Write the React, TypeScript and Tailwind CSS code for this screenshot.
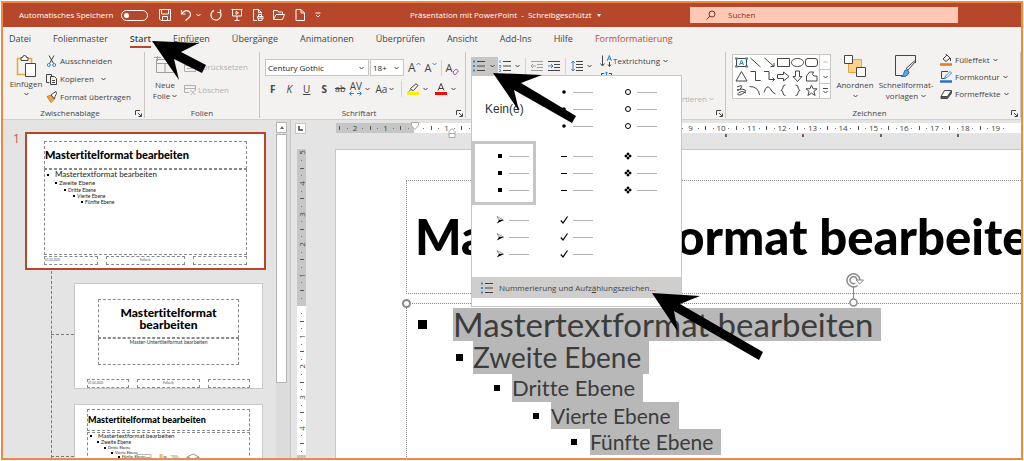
import type { ReactNode } from "react";

type IconProps = { w?: number; h?: number; className?: string; children: ReactNode };

function Icon({ w = 12, h = 12, className = "", children }: IconProps) {
  return (
    <svg
      width={w}
      height={h}
      viewBox={`0 0 ${w} ${h}`}
      fill="none"
      stroke="currentColor"
      strokeWidth="1"
      className={`shrink-0 ${className}`}
      aria-hidden="true"
    >
      {children}
    </svg>
  );
}

function Chevron({ className = "" }: { className?: string }) {
  return (
    <Icon w={5} h={4} className={className}>
      <path d="M.5 1l2 2 2-2" />
    </Icon>
  );
}

function Divider() {
  return <span className="h-4 w-px bg-[#d2d0ce]" />;
}

/* Title bar */

function TitleBar() {
  return (
    <header className="flex h-6 items-center bg-[#b7472a] pl-4 pr-[63px] text-white">
      <label htmlFor="autosave" className="mr-2">Automatisches Speichern</label>
      <input
        id="autosave"
        type="checkbox"
        role="switch"
        className="h-[11px] w-[27px] appearance-none rounded-full border border-white before:ml-[2px] before:mt-[2px] before:block before:size-[5px] before:rounded-full before:bg-white"
      />
      <div className="ml-[11px] flex items-center gap-[9px]">
        <button aria-label="Speichern">
          <Icon>
            <path d="M.5.5h11v11H2l-1.500-1.500zM2.500.5v4.500h7V.5M3.500 11.500v-4h5v4" />
          </Icon>
        </button>
        <button aria-label="Rückgängig" className="flex items-center gap-[4px]">
          <Icon>
            <path d="M1.500 1v4h4M1.500 5C4 1.500 7 1 9 2.500s2 4.500 0 6L5.500 11.500" strokeWidth="1.200" />
          </Icon>
          <Chevron />
        </button>
        <button aria-label="Wiederholen">
          <Icon>
            <path d="M10.500.5v3h-3M10.300 3.500A5 5 0 1 1 4 1.400" strokeWidth="1.200" />
          </Icon>
        </button>
        <button aria-label="Präsentation starten">
          <Icon>
            <path d="M.5.5h11M1.500.5v6.500h9V.5M6 7v4M3.500 11.500h5M5 2.300v3l2.500-1.500z" />
          </Icon>
        </button>
        <button aria-label="Drucken">
          <Icon>
            <path d="M5 11.500H1.500V.5h5l3 3v1M6.500.5v3h3M6.500 7V5.500h3V7M5.500 9.500V7.500h5.500v2.500M6.500 9h3.500v2.500H6.500z" />
          </Icon>
        </button>
        <button aria-label="Öffnen">
          <Icon>
            <path d="M.5 10V1.500h4L5.500 3h4v2M.5 10.500L3 5.500h8.500l-2 5z" />
          </Icon>
        </button>
        <button aria-label="Neu">
          <Icon>
            <path d="M2 .5h5l3.500 3.500v7.500H2zM7 .5V4h3.500" />
          </Icon>
        </button>
        <button aria-label="Symbolleiste anpassen">
          <Icon w={6} h={6}>
            <path d="M.5 1h5M1 3l2 2 2-2" />
          </Icon>
        </button>
      </div>
      <div className="flex flex-1 items-center justify-center gap-[6px]">
        <span className="whitespace-pre">Präsentation mit PowerPoint  -  Schreibgeschützt</span>
        <span className="border-x-2 border-t-[3px] border-x-transparent border-t-white" />
      </div>
      <label className="flex h-4 w-[268px] items-center gap-3 bg-[#ffc8b4] pl-4 text-[#8f2f1a]">
        <Icon w={10} h={10}>
          <circle cx="6" cy="4" r="3" />
          <path d="M4 6L.5 9.500" />
        </Icon>
        <input
          type="search"
          aria-label="Suchen"
          placeholder="Suchen"
          className="min-w-0 flex-1 bg-transparent outline-none placeholder:text-[#8f2f1a]"
        />
      </label>
    </header>
  );
}

const tabs = [
  "Datei", "Folienmaster", "Start", "Einfügen", "Übergänge", "Animationen",
  "Überprüfen", "Ansicht", "Add-Ins", "Hilfe", "Formformatierung",
];

function TabStrip() {
  return (
    <nav className="flex h-[23px] items-center gap-[22px] pl-[6px] text-[9px]">
      {tabs.map((tab) => {
        if (tab === "Start") {
          return (
            <button key={tab} className="mt-[3px] border-b-2 border-[#b7472a] pb-px font-semibold">
              {tab}
            </button>
          );
        }
        return (
          <button key={tab} className={tab === "Formformatierung" ? "text-[#c04a2b]" : ""}>
            {tab}
          </button>
        );
      })}
    </nav>
  );
}

/* Ribbon */

type GroupProps = { label: string; launcher?: boolean; className: string; children: ReactNode };

function Group({ label, launcher = true, className, children }: GroupProps) {
  return (
    <section className={`flex flex-col border-r border-[#c8c6c4] ${className}`}>
      <div className="flex-1">{children}</div>
      <div className="flex h-[10px] items-center px-[2px]">
        <span className="flex-1 text-center">{label}</span>
        {launcher ? (
          <button aria-label={`${label} öffnen`}>
            <Icon w={7} h={7}>
              <path d="M.5 5V.5H5M3 3l3 3M6.500 3.500v3h-3" />
            </Icon>
          </button>
        ) : null}
      </div>
    </section>
  );
}

function ClipboardGroup() {
  return (
    <Group label="Zwischenablage" className="w-[142px]">
      <div className="flex gap-[2px] pl-[5px]">
        <button className="flex w-9 flex-col items-center pt-[3px]">
          <Icon w={21} h={22} className="mb-[2px]">
            <path d="M5 3.500H1.500v16H9M12 3.500h3.500V8" stroke="#e8a33d" strokeWidth="1.500" />
            <path d="M5 5.500v-3h1.500a2 2 0 0 1 4 0H12v3z" fill="#fff" />
            <path d="M9.500 8.500h10v13h-10z" fill="#fff" />
          </Icon>
          <span className="leading-[10px]">Einfügen</span>
          <Chevron className="mt-[3px]" />
        </button>
        <div className="flex flex-col gap-[6px] pt-[3px] leading-3">
          <button className="flex items-center gap-[3px]">
            <Icon w={11}>
              <path d="M3 .5l4.500 8M8 .5L3.500 8.500" />
              <circle cx="2.800" cy="10" r="1.500" stroke="#2b88d8" />
              <circle cx="8.200" cy="10" r="1.500" stroke="#2b88d8" />
            </Icon>
            Ausschneiden
          </button>
          <button className="flex items-center gap-[3px]">
            <Icon w={11}>
              <path d="M3.500 9.500h-3v-8h5v2" />
              <path d="M4.500 3.500h4l2 2v6h-6zM6 7.500h3M6 9.500h3" />
            </Icon>
            Kopieren
            <Chevron className="ml-1" />
          </button>
          <button className="flex items-center gap-[3px]">
            <Icon w={11}>
              <path d="M1 5.500l4-1.500 3.500 4L5 11.500z" fill="#f2a33a" stroke="#d8801f" />
              <path d="M5 4l2-1.500L10 .5l.5 2L9 5.500 8.500 8z" fill="#fff" />
            </Icon>
            Format übertragen
          </button>
        </div>
      </div>
    </Group>
  );
}

function SlidesGroup() {
  return (
    <Group label="Folien" launcher={false} className="w-[115px]">
      <div className="flex gap-[6px] pl-[7px]">
        <button className="flex w-[26px] flex-col items-center pt-[4px]">
          <Icon w={22} h={20} className="mb-[3px] text-[#a19f9d]">
            <path d="M2.500 3.500h17v13h-17zM2.500 7.500h17M11 7.500v9" />
            <path d="M0 1.500h7M3.500 0v5" />
          </Icon>
          <span className="leading-[11px]">Neue</span>
          <span className="flex items-center gap-[2px] leading-[11px]">Folie <Chevron /></span>
        </button>
        <div className="flex flex-col gap-[11px] pt-[9px] leading-3 text-[#b1afad]">
          <button className="flex items-center gap-[2px]" disabled>
            <Icon>
              <path d="M.5 1.500h11v9H.5zM.5 4.500h11M3 7.500h6" />
            </Icon>
            Zurücksetzen
          </button>
          <button className="flex items-center gap-[2px]" disabled>
            <Icon>
              <path d="M.5 1.500h11v5M.5 1.500v7h5M.5 4.500h11M6.500 6l5 5M11.500 6l-5 5" />
            </Icon>
            Löschen
          </button>
        </div>
      </div>
    </Group>
  );
}

function FontGroup() {
  return (
    <Group label="Schriftart" className="w-[206px]">
      <div className="flex items-center gap-[4px] pl-[5px] pt-[7px]">
        <div className="flex gap-px">
          <div className="flex h-[17px] w-[104px] items-center border border-[#c8c6c4] bg-white pr-1">
            <select aria-label="Schriftart" className="min-w-0 flex-1 appearance-none pl-[2px] text-[#201f1e]">
              <option>Century Gothic</option>
            </select>
            <Chevron />
          </div>
          <div className="flex h-[17px] w-[34px] items-center border border-[#c8c6c4] bg-white pr-1">
            <select aria-label="Schriftgrad" className="min-w-0 flex-1 appearance-none pl-[2px] text-[#201f1e]">
              <option>18+</option>
            </select>
            <Chevron />
          </div>
        </div>
        <button className="flex items-start text-[12px] leading-[14px]" aria-label="Schriftgrad vergrößern">
          A
          <Icon w={5} h={6} className="text-[#2b88d8]"><path d="M.5 4l2-2 2 2" /></Icon>
        </button>
        <button className="flex items-start text-[11px] leading-[14px]" aria-label="Schriftgrad verkleinern">
          A
          <Icon w={5} h={6} className="text-[#2b88d8]"><path d="M.5 2l2 2 2-2" /></Icon>
        </button>
        <Divider />
        <button className="flex items-end text-[11px] leading-[14px]" aria-label="Formatierung löschen">
          A
          <Icon w={7} h={7} className="-ml-px text-[#a05fb4]"><path d="M1 4l3-3 2.500 2-3 3.500H2z" /></Icon>
        </button>
      </div>
      <div className="flex items-center gap-[11px] pl-[10px] pt-[5px] text-[10px] leading-[16px]">
        <button className="font-bold">F</button>
        <button className="italic">K</button>
        <button className="underline">U</button>
        <button className="font-bold">S</button>
        <button className="-ml-[3px] text-[9px] line-through">ab</button>
        <button className="-ml-[7px] flex items-center gap-[3px]" aria-label="Zeichenabstand">
          <span className="flex flex-col items-center leading-[9px]">
            AV
            <Icon w={13} h={5} className="text-[#2b88d8]">
              <path d="M1 2.500h4M8 2.500h4M2.500.5l-2 2 2 2M10.500.5l2 2-2 2" />
            </Icon>
          </span>
          <Chevron />
        </button>
        <button className="-ml-[6px] flex items-center gap-[2px]">Aa <Chevron /></button>
        <span className="-mx-[4px] flex"><Divider /></span>
        <button className="-ml-[2px] flex items-center gap-[4px]" aria-label="Texthervorhebungsfarbe">
          <Icon>
            <path d="M4.500 7l-1-1.500L9 .8l2 1.700-4.500 5zM4 6.500L2 8.500" />
            <path d="M0 10.500h12" stroke="#ffee00" strokeWidth="3" />
          </Icon>
          <Chevron />
        </button>
        <button className="-ml-[4px] flex items-center gap-[4px]" aria-label="Schriftfarbe">
          <Icon>
            <path d="M3 7.500L6 .5l3 7M4 5.500h4" />
            <path d="M0 10.500h12" stroke="#f00" strokeWidth="3" />
          </Icon>
          <Chevron />
        </button>
      </div>
    </Group>
  );
}

function ListIcon() {
  return (
    <Icon>
      <path d="M4 1.500h8M4 6h8M4 10.500h8" />
      <path d="M0 1.500h2M0 6h2M0 10.500h2" stroke="#2b88d8" strokeWidth="2" />
    </Icon>
  );
}

/* Bullet gallery */

const bulletShapes: Record<string, ReactNode> = {
  dot: <circle cx="4" cy="4" r="1.800" fill="#000" stroke="none" />,
  ring: <circle cx="4" cy="4" r="2.500" stroke="#000" />,
  square: <path d="M2 2h4v4H2z" fill="#000" stroke="none" />,
  dash: <path d="M1 4.500h6" stroke="#000" />,
  diamonds: <path d="M4 0l2 2-2 2-2-2zM4 4l2 2-2 2-2-2zM2 2l2 2-2 2-2-2zM6 2l2 2-2 2-2-2z" fill="#000" stroke="#fff" strokeWidth=".4" />,
  arrow: (
    <>
      <path d="M1 .5L7.500 4H3z" stroke="#555" strokeWidth=".6" />
      <path d="M7.800 4H3L.8 7.500z" fill="#000" stroke="none" />
    </>
  ),
  check: <path d="M.8 4.500L3 7 7.500.5" stroke="#000" strokeWidth="1.200" />,
};

function BulletCell({ shape, selected = false }: { shape: string; selected?: boolean }) {
  return (
    <button
      aria-label={shape}
      className={`flex h-16 flex-col items-start justify-center gap-[9px] border-[3px] pl-[21px] ${selected ? "border-[#c8c6c4]" : "border-transparent"}`}
    >
      {[0, 1, 2].map((row) => (
        <span key={row} className="flex items-center gap-[5px]">
          <Icon w={8} h={8}>{bulletShapes[shape]}</Icon>
          <span className="h-px w-5 bg-[#b3b3b3]" />
        </span>
      ))}
    </button>
  );
}

function BulletMenu() {
  return (
    <div className="absolute left-0 top-full z-10 w-[211px] border border-[#c8c6c4] bg-white pb-2">
      <div className="grid grid-cols-[64px_64px_64px] pb-2 pt-px">
        <button className="pl-[13px] text-left font-['Liberation_Sans'] text-[12px] text-[#333]">Kein(e)</button>
        <BulletCell shape="dot" />
        <BulletCell shape="ring" />
        <BulletCell shape="square" selected />
        <BulletCell shape="dash" />
        <BulletCell shape="diamonds" />
        <BulletCell shape="arrow" />
        <BulletCell shape="check" />
      </div>
      <button className="flex h-[21px] w-full items-center gap-[6px] bg-[#d0cecd] pl-[9px]">
        <ListIcon />
        <span>Nummerierung und Aufz<u>ä</u>hlungszeichen...</span>
      </button>
    </div>
  );
}

function ParagraphGroup() {
  return (
    <section className="flex w-[260px] flex-col border-r border-[#c8c6c4]">
      <div className="flex items-start pl-[5px]">
        <div className="flex items-center gap-[5px] pt-[5px]">
          <div className="relative">
            <button className="flex h-[18px] w-[27px] items-center gap-[5px] bg-[#c8c6c4] pl-[2px]" aria-label="Aufzählungszeichen">
              <ListIcon />
              <Chevron />
            </button>
            <BulletMenu />
          </div>
          <button className="-ml-[4px] flex items-center gap-[4px]" aria-label="Nummerierung">
            <Icon>
              <path d="M4 1.500h8M4 6h8M4 10.500h8" />
              <path d="M1 0v3M0 5.500h2L.5 7.500H2M0 9.500h1.500v2H0" stroke="#2b88d8" strokeWidth=".8" />
            </Icon>
            <Chevron />
          </button>
          <Divider />
          <button aria-label="Einzug verkleinern">
            <Icon className="text-[#a19f9d]">
              <path d="M0 1.500h12M6 4.500h6M6 7.500h6M0 10.500h12M5 6H0M2 4L0 6l2 2" />
            </Icon>
          </button>
          <button aria-label="Einzug vergrößern">
            <Icon>
              <path d="M0 1.500h12M6 4.500h6M6 7.500h6M0 10.500h12" />
              <path d="M0 6h5M3 4l2 2-2 2" stroke="#2b88d8" />
            </Icon>
          </button>
          <Divider />
          <button className="flex items-center gap-[4px]" aria-label="Zeilenabstand">
            <Icon>
              <path d="M5 1.500h7M5 4.500h7M5 7.500h7M5 10.500h7" />
              <path d="M2 1v10M.3 3L2 1l1.700 2M.3 9L2 11l1.700-2" stroke="#2b88d8" />
            </Icon>
            <Chevron />
          </button>
        </div>
        <div className="flex flex-col gap-[5px] pl-[8px] pt-[3px]">
          <button className="flex items-center gap-px leading-3">
            <Icon>
              <path d="M2.500.5v10M.5 8.500l2 2.500 2-2.500M9.500 7v4M8 9.500l1.500 2 1.500-2" />
              <path d="M7 6l2.300-5.500L11.500 6M8 4h3" stroke="#2b88d8" />
            </Icon>
            Textrichtung
            <Chevron className="ml-[2px]" />
          </button>
          <button aria-label="Text ausrichten">
            <Icon w={13}>
              <path d="M4 1.500H1.500V4M9 1.500h2.500V4" />
              <path d="M6.500 0v5M5 1.500L6.500 0 8 1.500" stroke="#2b88d8" />
            </Icon>
          </button>
        </div>
      </div>
      {/* SmartArt button, mostly covered by the open menu */}
      <button className="flex flex-1 items-end justify-end gap-[2px] pr-[11px] leading-[18px] text-[#b1afad]" disabled>
        konvertieren
        <Chevron className="mb-[7px]" />
      </button>
      <div className="flex h-[10px] items-center justify-end px-[2px]">
        <button aria-label="Absatz öffnen">
          <Icon w={7} h={7}>
            <path d="M.5 5V.5H5M3 3l3 3M6.500 3.500v3h-3" />
          </Icon>
        </button>
      </div>
    </section>
  );
}

const shapePaths = [
  "",
  "M1.500 2l10 9",
  "M1.500 2l9 8M7.500 10.500h3.500V7",
  "M.5 2.500h12v8H.5z",
  "M6.500 2.500c8 0 8 8 0 8s-8-8 0-8z",
  "M3 2.500h7q2.500 0 2.500 2.500v3q0 2.500-2.500 2.500H3Q.5 10.500.5 8V5q0-2.500 2.500-2.500z",
  "M6.500 1.500l5.500 9.500H1z",
  "M1.500 1.500h5v9h5",
  "M1 1.500h5v8h5.500M9.500 7.500l2 2-2 2",
  "M.5 4.500h6V2l5.500 4.500L6.500 11V8.500h-6z",
  "M4.500 1v5.500H2l4.500 5 4.500-5H8.500V1z",
  "M1.500 11V6L4.500 2h4q-2.500 3 .5 4h3v5z",
  "M2 3q7-3 4 1T2 6q6-2 8 0t-5 5q-4 0-1-2.500t7 .5",
  "M.5 2.500q9 0 10 8.500",
  "M1 8.500q3-9 6-4t5.500 5.500",
  "M8.500 1Q6 1 6 3t-2 3.500Q6 6.500 6 9t2.500 2.500",
  "M4.500 1Q7 1 7 3t2 3.500Q7 6.500 7 9t-2.500 2.500",
  "M6.500 1l1.600 3.800h4l-3.200 2.600 1.200 4.100-3.600-2.400-3.600 2.400 1.200-4.100L1 4.800h4z",
];

function DrawingGroup() {
  return (
    <Group label="Zeichnen" className="flex-1">
      <div className="flex items-start pl-[6px] pt-[2px]">
        <div className="flex border border-[#c8c6c4] bg-white">
          <div className="grid h-[43px] grid-cols-6 items-center px-px">
            {shapePaths.map((d, i) => (
              <button key={i} aria-label={`Form ${i + 1}`} className="flex w-[14px] justify-center">
                {i === 0 ? (
                  <Icon w={13} h={13}>
                    <path d="M1.500 2.500h10v8h-10z" />
                    <path d="M4.500 9l2-5 2 5M5.200 7.500h2.600" stroke="#2b88d8" />
                    <path d="M0 2.500h3M10 2.500h3M0 10.500h3M10 10.500h3" stroke="#2b88d8" strokeWidth="2" />
                  </Icon>
                ) : (
                  <Icon w={13} h={13}><path d={d} /></Icon>
                )}
              </button>
            ))}
          </div>
          <div className="flex w-[11px] flex-col divide-y divide-[#c8c6c4] border-l border-[#c8c6c4]">
            <button className="flex flex-1 items-center justify-center text-[#b1afad]" aria-label="Nach oben">
              <Chevron className="rotate-180" />
            </button>
            <button className="flex flex-1 items-center justify-center" aria-label="Nach unten">
              <Chevron />
            </button>
            <button className="flex flex-1 items-center justify-center" aria-label="Mehr">
              <Icon w={5} h={6}><path d="M0 .5h5M.5 3l2 2 2-2" /></Icon>
            </button>
          </div>
        </div>
        <button className="ml-[4px] flex w-[40px] flex-col items-center pt-px">
          <Icon w={22} h={22} className="mb-[3px]">
            <path d="M4.500 4.500h13v13h-13z" fill="#fbd48a" stroke="#e8a33d" />
            <path d="M.5.5h8v8h-8zM12.500 12.500h9v9h-9z" fill="#fff" />
          </Icon>
          <span className="leading-[10px]">Anordnen</span>
          <Chevron className="mt-[4px]" />
        </button>
        <button className="ml-px flex w-[60px] flex-col items-center pt-px">
          <Icon w={22} h={22} className="mb-[2px]">
            <path d="M20.500 8V.5H.5v20h8" />
            <path d="M21 6l-8 9-2-1.500L19.500 6z" fill="#fff" />
            <path d="M6 21.500q3-1 3-4t3.500-2.500q3 2 .5 4.500-2.500 3-7 2z" fill="#5ba7e6" stroke="#2b6cb0" />
          </Icon>
          <span className="leading-[11px]">Schnellformat-</span>
          <span className="flex items-center gap-[3px] leading-[11px]">vorlagen <Chevron /></span>
        </button>
        <div className="ml-[4px] flex flex-col gap-[5px] leading-3">
          <button className="flex items-center gap-[3px]">
            <Icon>
              <path d="M3 5l4-4 3 3-4 3.500zM7 1L5.500 0M10.500 4v3" />
              <path d="M0 10.500h12" stroke="#e07b1f" strokeWidth="2.500" />
            </Icon>
            Fülleffekt <Chevron />
          </button>
          <button className="flex items-center gap-[3px]">
            <Icon>
              <path d="M8 .5H1.500v7H5" />
              <path d="M4.500 7.500l1-2.500L10 .5l1.500 1.500L7 6.500z" fill="#fff" stroke="#2b88d8" />
              <path d="M0 10.500h12" stroke="#2f6fc2" strokeWidth="2.500" />
            </Icon>
            Formkontur <Chevron />
          </button>
          <button className="flex items-center gap-[3px]">
            <Icon>
              <path d="M1 8.500v2h6.500L11.500 5V3L7 8.500z" fill="#605e5c" />
              <path d="M4.500 2.500h7L7.500 8.500H1z" fill="#fff" />
            </Icon>
            Formeffekte <Chevron />
          </button>
        </div>
      </div>
    </Group>
  );
}

function Ribbon() {
  return (
    <div className="flex h-[70px] border-b border-[#d2d0ce] pb-px pt-[2px]">
      <ClipboardGroup />
      <SlidesGroup />
      <FontGroup />
      <ParagraphGroup />
      <DrawingGroup />
    </div>
  );
}

/* Slide thumbnails */

const dashed = "border border-dashed border-[#8a8a8a]";

function Footers() {
  return (
    <div className="grid grid-cols-[27fr_40fr_27fr] gap-2 text-[3px] leading-[7px] text-[#555]">
      <span className={`h-[9px] ${dashed}`}>01.04.2020</span>
      <span className={`h-[9px] text-center ${dashed}`}>Fußzeile</span>
      <span className={`h-[9px] ${dashed}`} />
    </div>
  );
}

const levels = ["Mastertextformat bearbeiten", "Zweite Ebene", "Dritte Ebene", "Vierte Ebene", "Fünfte Ebene"];

function Outline({ small = false }: { small?: boolean }) {
  const sizes = small
    ? ["text-[6px] leading-[6px]", "pl-[7px] text-[5px] leading-[6px]", "pl-[14px] text-[4px] leading-[5px]", "pl-[21px] text-[4px] leading-[5px]", "pl-[28px] text-[4px] leading-[4px]"]
    : ["text-[8px] leading-[9px]", "pl-[8px] text-[6px] leading-[8px]", "pl-[17px] text-[5px] leading-[6px]", "pl-[26px] text-[5px] leading-[6px]", "pl-[34px] text-[5px] leading-[6px]"];
  return (
    <ul className="text-[#222]">
      {levels.map((text, i) => (
        <li key={text} className={`flex items-center ${sizes[i]}`}>
          <span className={`ml-[2px] size-[2px] bg-black ${i === 0 ? "mr-[6px]" : "mr-[2px]"}`} />
          {text}
        </li>
      ))}
    </ul>
  );
}

function ThumbnailPane() {
  return (
    <aside className="relative w-[273px] shrink-0 overflow-hidden pl-[10px] pt-3 font-['Lato'] [font-variant-ligatures:none]">
      <div className="flex gap-[4px]">
        <span className="w-2 font-['Open_Sans'] text-[12px] leading-[14px] text-[#d0533a]">1</span>
        <div className="h-[138px] w-[241px] overflow-hidden border-2 border-[#b7472a] bg-white px-[17px] pt-[7px]">
          <div className={`flex h-[28px] items-center text-[11px] font-black text-black ${dashed}`}>
            Mastertitelformat bearbeiten
          </div>
          <div className={`mb-px h-[86px] ${dashed}`}>
            <Outline />
          </div>
          <Footers />
        </div>
      </div>
      {/* branches that tie the layouts to their master */}
      <span className="absolute bottom-0 left-12 top-[151px] border-l border-dashed border-[#7a7a7a]" />
      <span className="absolute left-12 top-[214px] w-[23px] border-t border-dashed border-[#7a7a7a]" />
      <span className="absolute left-12 top-[336px] w-[23px] border-t border-dashed border-[#7a7a7a]" />
      <div className="ml-[61px] mt-[13px] flex h-[106px] w-[189px] flex-col border border-[#c8c8c8] bg-white px-[12px] pt-[15px]">
        <div className={`mx-[11px] flex h-[39px] items-center justify-center text-center text-[12px] font-black leading-3 text-black ${dashed}`}>
          Mastertitelformat<br />bearbeiten
        </div>
        <div className={`mx-[11px] h-[27px] text-center text-[5px] leading-[7px] text-[#333] ${dashed}`}>
          Master-Untertitelformat bearbeiten
        </div>
        <div className="mt-auto">
          <Footers />
        </div>
      </div>
      <div className="ml-[61px] mt-[15px] h-[106px] w-[189px] border border-[#c8c8c8] bg-white px-[12px] pt-1">
        <div className={`flex h-[22px] items-center text-[9px] font-black text-black ${dashed}`}>
          Mastertitelformat bearbeiten
        </div>
        <div className={`relative mt-px h-[65px] ${dashed}`}>
          <Outline small />
          <svg width="70" height="12" viewBox="0 0 70 12" className="absolute left-[48px] top-[19px]" fill="none">
            <path d="M1 2.500h14v8H1zM1 5.500h14" stroke="#b5b5b5" />
            <path d="M21 10V6M29 10V4" stroke="#7fb0c8" strokeWidth="3" />
            <path d="M25 10V2" stroke="#e8c070" strokeWidth="3" />
            <path d="M34 3h7l3 4h-6z" fill="#bcd8d0" />
            <path d="M51 5l6-3 6 3v6M51 5v6M51 5l6 2 6-2" stroke="#999" />
          </svg>
        </div>
      </div>
    </aside>
  );
}

function ThumbnailScrollbar() {
  return (
    <div className="flex w-[15px] shrink-0 flex-col items-start gap-px border-r border-[#c6c6c6] bg-[#dcdcdc] pt-[2px]">
      <button className="flex h-[11px] w-[11px] items-center justify-center border border-[#b5b5b5] bg-white" aria-label="Nach oben blättern">
        <span className="border-x-2 border-b-[3px] border-x-transparent border-b-[#666]" />
      </button>
      <div className="h-[249px] w-[11px] border border-[#b5b5b5] bg-white" />
    </div>
  );
}

/* Rulers and slide */

const hMarks = Array.from({ length: 22 }, (_, i) => i - 2);
const vMarks = Array.from({ length: 10 }, (_, i) => i - 5);

function HorizontalRuler() {
  return (
    <div className="relative ml-[45px] mt-[3px] flex h-[10px] bg-[linear-gradient(to_right,#c6c6c6_78px,#fff_78px)] pr-[14px] text-[#444]">
      {hMarks.map((n) => (
        <span key={n} className="grid min-w-0 flex-1 grid-cols-4 place-items-center leading-[10px]">
          <i className="h-1 w-px bg-[#555]" />
          <i className="size-px bg-[#777]" />
          <span>{n === 0 ? "" : Math.abs(n)}</span>
          <i className="size-px bg-[#777]" />
        </span>
      ))}
      {/* indent markers */}
      <svg width="8" height="8" viewBox="0 0 8 8" className="absolute -top-px left-[75px]" fill="#fff" stroke="#aaa">
        <path d="M.5.5h7v3L4 7.500.5 3.500z" />
      </svg>
      <svg width="8" height="10" viewBox="0 0 8 10" className="absolute left-[112px] top-[5px]" fill="#fff" stroke="#aaa">
        <path d="M1 3.500l3-3 3 3v6H1zM1 5.500h6" />
      </svg>
      <i className="absolute left-[389px] top-[11px] h-[3px] w-[2px] bg-[#666]" />
      <i className="absolute left-[466px] top-[11px] h-[3px] w-[2px] bg-[#666]" />
      <i className="absolute left-[544px] top-[11px] h-[3px] w-[2px] bg-[#666]" />
      <i className="absolute left-[621px] top-[11px] h-[3px] w-[2px] bg-[#666]" />
    </div>
  );
}

function VerticalRuler() {
  return (
    <div className="ml-[6px] mr-[29px] w-[9px] shrink-0 bg-[linear-gradient(#c6c6c6_157px,#fff_157px,#fff_306px,#c6c6c6_306px)] text-[#444]">
      <div className="flex h-[306px] flex-col">
        {vMarks.map((n) => (
          <span key={n} className="grid min-h-0 flex-1 grid-rows-4 place-items-center leading-[7px]">
            <span className="-rotate-90">{n === 0 ? "" : Math.abs(n)}</span>
            <i className="size-px bg-[#777]" />
            <i className="h-px w-1 bg-[#555]" />
            <i className="size-px bg-[#777]" />
          </span>
        ))}
      </div>
    </div>
  );
}

type LevelProps = { indent: string; bullet: string; text: string; children: string };

function Level({ indent, bullet, text, children }: LevelProps) {
  return (
    <li className={`flex items-center ${indent}`}>
      <span className={`shrink-0 bg-black ${bullet}`} />
      <span className={`whitespace-nowrap bg-[#b8b8b8] pr-2 ${text}`}>{children}</span>
    </li>
  );
}

function Slide() {
  return (
    <div className="min-w-0 flex-1 overflow-hidden border-l border-t border-[#c8c8c8] bg-white pl-[70px] pt-[30px] font-['Lato'] [font-variant-ligatures:none]">
      <div className="flex h-[114px] items-center whitespace-nowrap border border-r-0 border-dotted border-[#8a8a8a] pl-2 text-[49px] font-black text-black">
        Mastertitelformat bearbeiten
      </div>
      <div className="relative mt-[9px] h-[200px] border-l border-t border-dotted border-[#8a8a8a] pt-1">
        <i className="absolute -left-[5px] -top-[5px] size-[9px] rounded-full border-2 border-[#8a8a8a] bg-white" />
        <svg width="20" height="34" viewBox="0 0 20 34" className="absolute -top-[31px] left-[437px]" fill="none" stroke="#8a8a8a">
          <path d="M9.500 13v12" />
          <circle cx="9.500" cy="29.500" r="3.500" fill="#fff" strokeWidth="1.500" />
          <path d="M13.500 12.500A6.500 6.500 0 1 1 16 7" strokeWidth="1.500" />
          <path d="M11.500 10A3.500 3.500 0 1 1 13 7" strokeWidth="1.500" />
          <path d="M12 7h7.500l-3.800 4z" fill="#fff" />
        </svg>
        <ul className="text-[#3c3c3c]">
          <Level indent="pl-[11px]" bullet="mr-[26px] size-[9px]" text="text-[33px] leading-[33px]">Mastertextformat bearbeiten</Level>
          <Level indent="pl-[49px]" bullet="mr-[10px] size-[7px]" text="text-[28px] leading-[33px]">Zweite Ebene</Level>
          <Level indent="pl-[87px]" bullet="mr-[12px] size-[6px]" text="text-[22px] leading-[28px]">Dritte Ebene</Level>
          <Level indent="pl-[126px]" bullet="mr-[12px] size-[6px]" text="text-[21px] leading-[27px]">Vierte Ebene</Level>
          <Level indent="pl-[164px]" bullet="mr-[13px] size-[6px]" text="text-[21px] leading-[26px]">Fünfte Ebene</Level>
        </ul>
      </div>
    </div>
  );
}

function Editor() {
  return (
    <main className="flex min-w-0 flex-1 flex-col">
      <div className="relative">
        <span className="absolute left-1 top-[3px] flex size-[11px] items-center justify-center border border-[#c6c6c6] bg-white">
          <Icon w={5} h={5}><path d="M1 0v4h4" strokeWidth="1.500" /></Icon>
        </span>
        <HorizontalRuler />
      </div>
      <div className="mt-[16px] flex min-h-0 flex-1">
        <VerticalRuler />
        <Slide />
      </div>
    </main>
  );
}

function Pointer({ className, d }: { className: string; d: string }) {
  return (
    <svg width="112" height="70" viewBox="0 0 112 70" className={`pointer-events-none absolute z-20 ${className}`} aria-hidden="true">
      <path d={d} fill="#000" />
    </svg>
  );
}

export default function App() {
  return (
    <div className="relative h-screen overflow-hidden bg-white p-px font-['Open_Sans',sans-serif] text-[8px] text-[#444]">
      <div className="flex h-full flex-col overflow-hidden border-2 border-[#ee8a45] bg-[#f3f2f1]">
        <TitleBar />
        <TabStrip />
        <Ribbon />
        <div className="flex min-h-0 flex-1 bg-[#e4e4e4]">
          <ThumbnailPane />
          <ThumbnailScrollbar />
          <Editor />
        </div>
      </div>
      <Pointer className="left-[152px] top-[41px]" d="M0 0L47 2 29 11 54 24 50 32 22 18 27 39z" />
      <Pointer className="left-[493px] top-[73px]" d="M0 0L49 2 28 10 83 43 79 50 21 17 26 38z" />
      <Pointer className="left-[652px] top-[293px]" d="M0 0L48 3 28 11 111 59 107 67 22 18 26 39z" />
    </div>
  );
}
